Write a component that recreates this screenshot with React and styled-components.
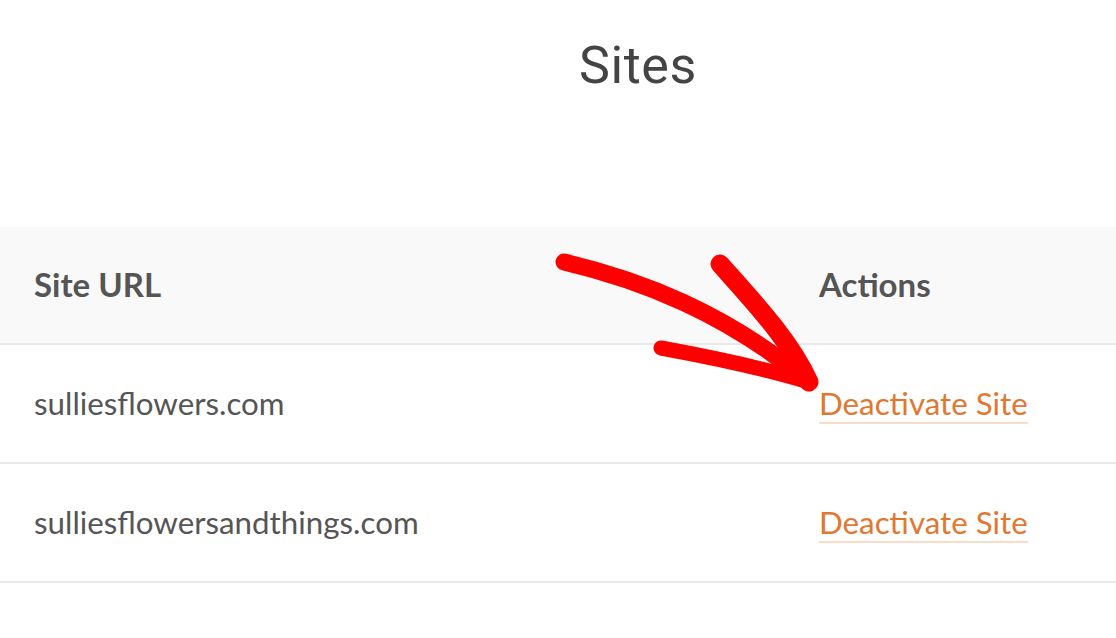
import React from "react";
import styled, { createGlobalStyle } from "styled-components";

const Global = createGlobalStyle`
  html, body { margin: 0; padding: 0; background: #fff; }
  body { font-family: Lato, "Noto Sans", sans-serif; }
`;

const Page = styled.div`
  position: relative;
  width: 1116px;
  height: 638px;
  overflow: hidden;
  background: #fff;
`;

const TitleBar = styled.div`
  padding: 36px 0 0 160px;
  height: 227px;
  box-sizing: border-box;
  text-align: center;
`;

const Title = styled.h1`
  margin: 0;
  font-family: "Roboto", "DejaVu Sans", sans-serif;
  font-weight: 400;
  font-size: 52px;
  line-height: 60px;
  color: #444;
  letter-spacing: 0.6px;
`;

const Table = styled.div`
  display: flex;
  flex-direction: column;
`;

const Row = styled.div`
  display: grid;
  grid-template-columns: 785px 1fr;
  align-items: center;
  height: ${(p) => (p.$head ? 116 : 117)}px;
  padding-left: 34px;
  background: ${(p) => (p.$head ? "#f9f9f9" : "#fff")};
  border-bottom: 2px solid #e9e9e9;
  box-sizing: content-box;
`;

const Cell = styled.div`
  font-size: ${(p) => (p.$head ? 33 : 31.3)}px;
  font-weight: ${(p) => (p.$head ? 700 : 400)};
  color: #555;
  white-space: nowrap;
  line-height: 1.2;
`;

const Link = styled.a`
  color: #e27730;
  text-decoration: none;
  border-bottom: 2px solid #f8dcc8;
`;

const Overlay = styled.svg`
  position: absolute;
  left: 0;
  top: 0;
  pointer-events: none;
`;

export default function App() {
  return (
    <Page>
      <Global />
      <TitleBar>
        <Title>Sites</Title>
      </TitleBar>
      <Table>
        <Row $head>
          <Cell $head>Site URL</Cell>
          <Cell $head>Actions</Cell>
        </Row>
        <Row>
          <Cell>sulliesflowers.com</Cell>
          <Cell><Link href="#">Deactivate Site</Link></Cell>
        </Row>
        <Row>
          <Cell>sulliesflowersandthings.com</Cell>
          <Cell><Link href="#">Deactivate Site</Link></Cell>
        </Row>
      </Table>
      <Overlay width="1116" height="638" viewBox="0 0 1116 638">
        <g fill="none" stroke="#ff0000" strokeLinecap="round" strokeLinejoin="round">
          <path d="M564 262 C 640 280, 725 312, 809 382" strokeWidth="17" />
          <path d="M720 264 C 752 300, 790 340, 809 382" strokeWidth="19" />
          <path d="M661 348 C 710 357, 760 367, 809 382" strokeWidth="15" />
        </g>
      </Overlay>
    </Page>
  );
}
